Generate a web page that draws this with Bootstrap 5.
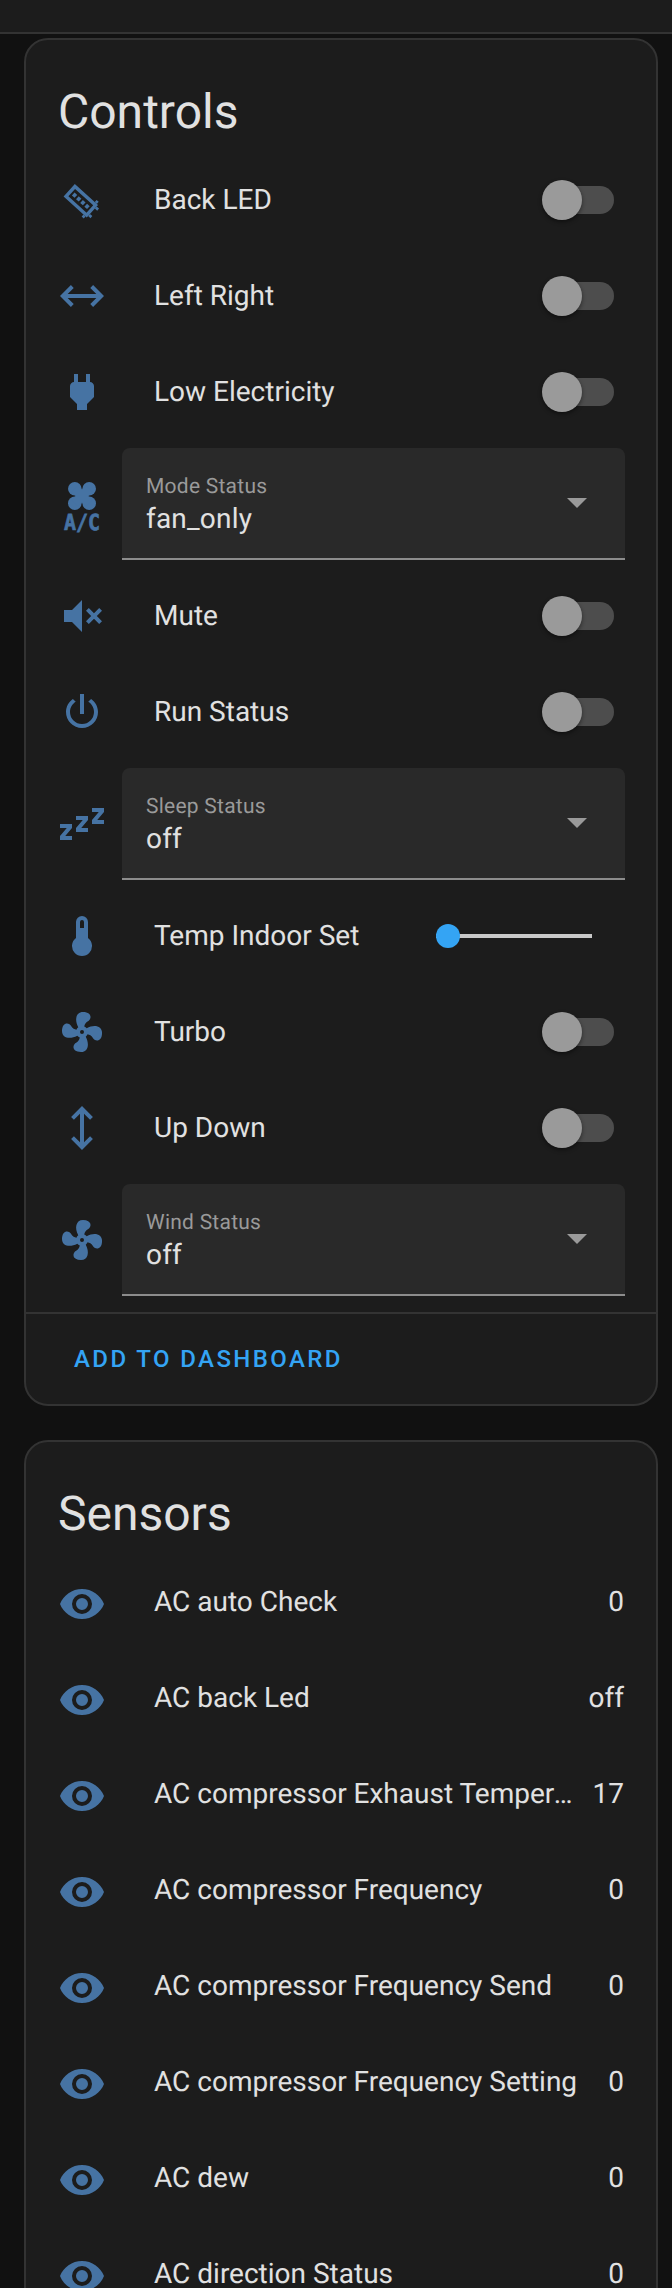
<!DOCTYPE html>
<html lang="en">
<head>
    <meta charset="UTF-8">
    <meta name="viewport" content="width=device-width, initial-scale=1.0">
    <title>Controls</title>
    <link href="https://cdn.jsdelivr.net/npm/bootstrap@5.3.0/dist/css/bootstrap.min.css" rel="stylesheet">
    <style>
        html, body { height: 100%; overflow: hidden; }
        body { background: #111; color: #e1e1e1; font-family: Roboto, "Liberation Sans", sans-serif; font-size: 28px; text-rendering: geometricPrecision; }
        .top-bar { height: 34px; background: #1c1c1c; border-bottom: 2px solid #333; }
        .page-wrap { padding: 4px 14px 0 24px; }
        .ha-card { background: #1c1c1c; border: 2px solid #333; border-radius: 24px; color: #e1e1e1; margin-bottom: 34px; }
        .ha-title { height: 112px; padding: 27px 0 0 32px; font-size: 48px; font-weight: 400; line-height: 90px; margin: 0; }
        .ha-title-sensors { height: 114px; }
        .ha-list { padding: 0 32px 8px; }
        .ha-row { height: 96px; }
        .ha-row-select { height: 128px; }
        .ha-icon { width: 48px; height: 48px; flex: none; fill: #4673a3; overflow: visible; }
        .ha-name { margin-left: 48px; white-space: nowrap; overflow: hidden; text-overflow: ellipsis; min-width: 0; }
        .ha-value { margin-left: 18px; }
        .ha-sensor-row .ha-name, .ha-sensor-row .ha-value { padding-bottom: 4px; }
        .ha-toggle { position: relative; width: 64px; height: 28px; margin-right: 10px; border-radius: 14px; background: #4d4d4d; }
        .ha-toggle::after { content: ""; position: absolute; left: -8px; top: -6px; width: 40px; height: 40px; border-radius: 50%; background: #9a9a9a; box-shadow: 0 2px 4px rgba(0, 0, 0, .45); }
        .ha-select { height: 112px; margin-left: 16px; margin-right: -1px; padding-left: 24px; background: #292929; border-bottom: 2px solid #8c8c8c; border-radius: 8px 8px 0 0; }
        .ha-select-label { font-size: 21px; line-height: 26px; letter-spacing: .25px; color: #9a9a9a; padding-top: 26px; }
        .ha-select-value { line-height: 36px; padding-top: 1px; letter-spacing: .2px; }
        .ha-caret { width: 0; height: 0; margin-right: 38px; border-left: 10px solid transparent; border-right: 10px solid transparent; border-top: 10px solid #9a9a9a; }
        .ha-range { width: 156px; height: 24px; margin-right: 32px; }
        .ha-range::-webkit-slider-runnable-track { height: 4px; background: #c8c8c8; border-radius: 0; }
        .ha-range::-webkit-slider-thumb { width: 24px; height: 24px; margin-top: -10px; background: #34a4f4; border-radius: 50%; }
        .ha-footer { height: 92px; padding-left: 30px; border-top: 2px solid #333; }
        .ha-add { padding: 0 18px; font-size: 24px; font-weight: 500; letter-spacing: 2.4px; color: #34a4f4; border: 0; }
        .ac-text { font-family: "DejaVu Sans Mono", monospace; font-size: 11px; font-weight: 700; fill: #4673a3; stroke: #4673a3; stroke-width: .35px; }
    </style>
</head>
<body>
    <svg width="0" height="0" class="position-absolute">
        <symbol id="i-led" viewBox="0 0 24 24">
            <g transform="rotate(42 11.4 12.4)">
                <path fill-rule="evenodd" d="M3.6 8.2H19.2V16.6H3.6ZM5.3 9.9V14.9H17.5V9.9Z"/>
                <path d="M6.3 11.4H8.1V13.4H6.3ZM9.1 11.4H10.9V13.4H9.1ZM11.9 11.4H13.7V13.4H11.9ZM14.7 11.4H16.5V13.4H14.7ZM19.2 9.2H20.8V10.6H19.2ZM19.2 14.2H20.8V15.6H19.2ZM17 16.6H18.4V18H17ZM17 6.8H18.4V8.2H17Z"/>
            </g>
        </symbol>
        <symbol id="i-leftright" viewBox="0 0 24 24"><path d="M6.45,17.45L1,12L6.45,6.55L7.86,7.96L4.83,11H19.17L16.14,7.96L17.55,6.55L23,12L17.55,17.45L16.14,16.04L19.17,13H4.83L7.86,16.04L6.45,17.45Z"/></symbol>
        <symbol id="i-plug" viewBox="0 0 24 24"><path d="M16,7V3H14V7H10V3H8V7C7,7 6,8 6,9V14.5L9.5,18V21H14.5V18L18,14.5V9C18,8 17,7 16,7Z"/></symbol>
        <symbol id="i-fan" viewBox="0 0 24 24"><path d="M12,11A1,1 0 0,0 11,12A1,1 0 0,0 12,13A1,1 0 0,0 13,12A1,1 0 0,0 12,11M12.5,2C17,2 17.11,5.57 14.75,6.75C13.76,7.24 13.32,8.29 13.13,9.22C13.61,9.42 14.03,9.73 14.35,10.13C18.05,8.13 22.03,8.92 22.03,12.5C22.03,17 18.46,17.1 17.28,14.73C16.78,13.74 15.72,13.3 14.79,13.11C14.59,13.59 14.28,14 13.88,14.34C15.87,18.03 15.08,22 11.5,22C7,22 6.91,18.42 9.27,17.24C10.25,16.75 10.69,15.71 10.89,14.79C10.4,14.59 9.97,14.27 9.65,13.87C5.96,15.85 2,15.07 2,11.5C2,7 5.56,6.89 6.74,9.26C7.24,10.25 8.29,10.68 9.22,10.87C9.41,10.39 9.73,9.97 10.14,9.65C8.15,5.96 8.94,2 12.5,2Z"/></symbol>
        <symbol id="i-fan-ac" viewBox="0 0 24 24" overflow="visible">
            <circle cx="8.4" cy="4.4" r="3.4"/>
            <circle cx="15.6" cy="4.4" r="3.4"/>
            <circle cx="8.4" cy="11.6" r="3.4"/>
            <circle cx="15.6" cy="11.6" r="3.4"/>
            <path d="M8.4 4.4 15.6 11.6M15.6 4.4 8.4 11.6" stroke="#4673a3" stroke-width="4.6"/>
            <text class="ac-text" x="3" y="25" textLength="18" lengthAdjust="spacingAndGlyphs">A/C</text>
        </symbol>
        <symbol id="i-mute" viewBox="0 0 24 24"><path d="M3,9H7L12,4V20L7,15H3V9M16.59,12L14,9.41L15.41,8L18,10.59L20.59,8L22,9.41L19.41,12L22,14.59L20.59,16L18,13.41L15.41,16L14,14.59L16.59,12Z"/></symbol>
        <symbol id="i-power" viewBox="0 0 24 24"><path d="M16.56,5.44L15.11,6.89C16.84,7.94 18,9.83 18,12A6,6 0 0,1 12,18A6,6 0 0,1 6,12C6,9.83 7.16,7.94 8.88,6.88L7.44,5.44C5.36,6.88 4,9.28 4,12A8,8 0 0,0 12,20A8,8 0 0,0 20,12C20,9.28 18.64,6.88 16.56,5.44M13,3H11V13H13"/></symbol>
        <symbol id="i-sleep" viewBox="0 0 24 24"><path d="M23,12H17V10L20.39,6H17V4H23V6L19.62,10H23V12M15,16H9V14L12.39,10H9V8H15V10L11.62,14H15V16M7,20H1V18L4.39,14H1V12H7V14L3.62,18H7V20Z"/></symbol>
        <symbol id="i-temp" viewBox="0 0 24 24"><path d="M15 13V5A3 3 0 0 0 9 5V13A5 5 0 1 0 15 13M12 4A1 1 0 0 1 13 5V8H11V5A1 1 0 0 1 12 4Z"/></symbol>
        <symbol id="i-updown" viewBox="0 0 24 24"><path d="M17.45,17.55L12,23L6.55,17.55L7.96,16.14L11,19.17V4.83L7.96,7.86L6.55,6.45L12,1L17.45,6.45L16.04,7.86L13,4.83V19.17L16.04,16.14L17.45,17.55Z"/></symbol>
        <symbol id="i-eye" viewBox="0 0 24 24"><path d="M12,9A3,3 0 0,0 9,12A3,3 0 0,0 12,15A3,3 0 0,0 15,12A3,3 0 0,0 12,9M12,17A5,5 0 0,1 7,12A5,5 0 0,1 12,7A5,5 0 0,1 17,12A5,5 0 0,1 12,17M12,4.5C7,4.5 2.73,7.61 1,12C2.73,16.39 7,19.5 12,19.5C17,19.5 21.27,16.39 23,12C21.27,7.61 17,4.5 12,4.5Z"/></symbol>
    </svg>

    <div class="top-bar"></div>

    <div class="page-wrap">
        <!-- Controls -->
        <div class="card ha-card">
            <h1 class="ha-title">Controls</h1>
            <div class="ha-list">
                <div class="ha-row d-flex align-items-center">
                    <svg class="ha-icon"><use href="#i-led"/></svg>
                    <span class="ha-name flex-grow-1">Back LED</span>
                    <span class="ha-toggle"></span>
                </div>
                <div class="ha-row d-flex align-items-center">
                    <svg class="ha-icon"><use href="#i-leftright"/></svg>
                    <span class="ha-name flex-grow-1">Left Right</span>
                    <span class="ha-toggle"></span>
                </div>
                <div class="ha-row d-flex align-items-center">
                    <svg class="ha-icon"><use href="#i-plug"/></svg>
                    <span class="ha-name flex-grow-1">Low Electricity</span>
                    <span class="ha-toggle"></span>
                </div>
                <div class="ha-row-select d-flex align-items-center">
                    <svg class="ha-icon"><use href="#i-fan-ac"/></svg>
                    <div class="ha-select flex-grow-1 d-flex align-items-center">
                        <div class="flex-grow-1 align-self-start">
                            <div class="ha-select-label">Mode Status</div>
                            <div class="ha-select-value">fan_only</div>
                        </div>
                        <span class="ha-caret"></span>
                    </div>
                </div>
                <div class="ha-row d-flex align-items-center">
                    <svg class="ha-icon"><use href="#i-mute"/></svg>
                    <span class="ha-name flex-grow-1">Mute</span>
                    <span class="ha-toggle"></span>
                </div>
                <div class="ha-row d-flex align-items-center">
                    <svg class="ha-icon"><use href="#i-power"/></svg>
                    <span class="ha-name flex-grow-1">Run Status</span>
                    <span class="ha-toggle"></span>
                </div>
                <div class="ha-row-select d-flex align-items-center">
                    <svg class="ha-icon"><use href="#i-sleep"/></svg>
                    <div class="ha-select flex-grow-1 d-flex align-items-center">
                        <div class="flex-grow-1 align-self-start">
                            <div class="ha-select-label">Sleep Status</div>
                            <div class="ha-select-value">off</div>
                        </div>
                        <span class="ha-caret"></span>
                    </div>
                </div>
                <div class="ha-row d-flex align-items-center">
                    <svg class="ha-icon"><use href="#i-temp"/></svg>
                    <span class="ha-name flex-grow-1">Temp Indoor Set</span>
                    <input type="range" class="form-range ha-range" min="16" max="30" value="16">
                </div>
                <div class="ha-row d-flex align-items-center">
                    <svg class="ha-icon"><use href="#i-fan"/></svg>
                    <span class="ha-name flex-grow-1">Turbo</span>
                    <span class="ha-toggle"></span>
                </div>
                <div class="ha-row d-flex align-items-center">
                    <svg class="ha-icon"><use href="#i-updown"/></svg>
                    <span class="ha-name flex-grow-1">Up Down</span>
                    <span class="ha-toggle"></span>
                </div>
                <div class="ha-row-select d-flex align-items-center">
                    <svg class="ha-icon"><use href="#i-fan"/></svg>
                    <div class="ha-select flex-grow-1 d-flex align-items-center">
                        <div class="flex-grow-1 align-self-start">
                            <div class="ha-select-label">Wind Status</div>
                            <div class="ha-select-value">off</div>
                        </div>
                        <span class="ha-caret"></span>
                    </div>
                </div>
            </div>
            <div class="ha-footer d-flex align-items-center">
                <button type="button" class="btn ha-add">ADD TO DASHBOARD</button>
            </div>
        </div>

        <!-- Sensors -->
        <div class="card ha-card">
            <h1 class="ha-title ha-title-sensors">Sensors</h1>
            <div class="ha-list">
                <div class="ha-row ha-sensor-row d-flex align-items-center">
                    <svg class="ha-icon"><use href="#i-eye"/></svg>
                    <span class="ha-name flex-grow-1">AC auto Check</span>
                    <span class="ha-value">0</span>
                </div>
                <div class="ha-row ha-sensor-row d-flex align-items-center">
                    <svg class="ha-icon"><use href="#i-eye"/></svg>
                    <span class="ha-name flex-grow-1">AC back Led</span>
                    <span class="ha-value">off</span>
                </div>
                <div class="ha-row ha-sensor-row d-flex align-items-center">
                    <svg class="ha-icon"><use href="#i-eye"/></svg>
                    <span class="ha-name flex-grow-1">AC compressor Exhaust Temperature</span>
                    <span class="ha-value">17</span>
                </div>
                <div class="ha-row ha-sensor-row d-flex align-items-center">
                    <svg class="ha-icon"><use href="#i-eye"/></svg>
                    <span class="ha-name flex-grow-1">AC compressor Frequency</span>
                    <span class="ha-value">0</span>
                </div>
                <div class="ha-row ha-sensor-row d-flex align-items-center">
                    <svg class="ha-icon"><use href="#i-eye"/></svg>
                    <span class="ha-name flex-grow-1">AC compressor Frequency Send</span>
                    <span class="ha-value">0</span>
                </div>
                <div class="ha-row ha-sensor-row d-flex align-items-center">
                    <svg class="ha-icon"><use href="#i-eye"/></svg>
                    <span class="ha-name flex-grow-1">AC compressor Frequency Setting</span>
                    <span class="ha-value">0</span>
                </div>
                <div class="ha-row ha-sensor-row d-flex align-items-center">
                    <svg class="ha-icon"><use href="#i-eye"/></svg>
                    <span class="ha-name flex-grow-1">AC dew</span>
                    <span class="ha-value">0</span>
                </div>
                <div class="ha-row ha-sensor-row d-flex align-items-center">
                    <svg class="ha-icon"><use href="#i-eye"/></svg>
                    <span class="ha-name flex-grow-1">AC direction Status</span>
                    <span class="ha-value">0</span>
                </div>
            </div>
        </div>
    </div>

    <script src="https://cdn.jsdelivr.net/npm/bootstrap@5.3.0/dist/js/bootstrap.bundle.min.js"></script>
</body>
</html>
